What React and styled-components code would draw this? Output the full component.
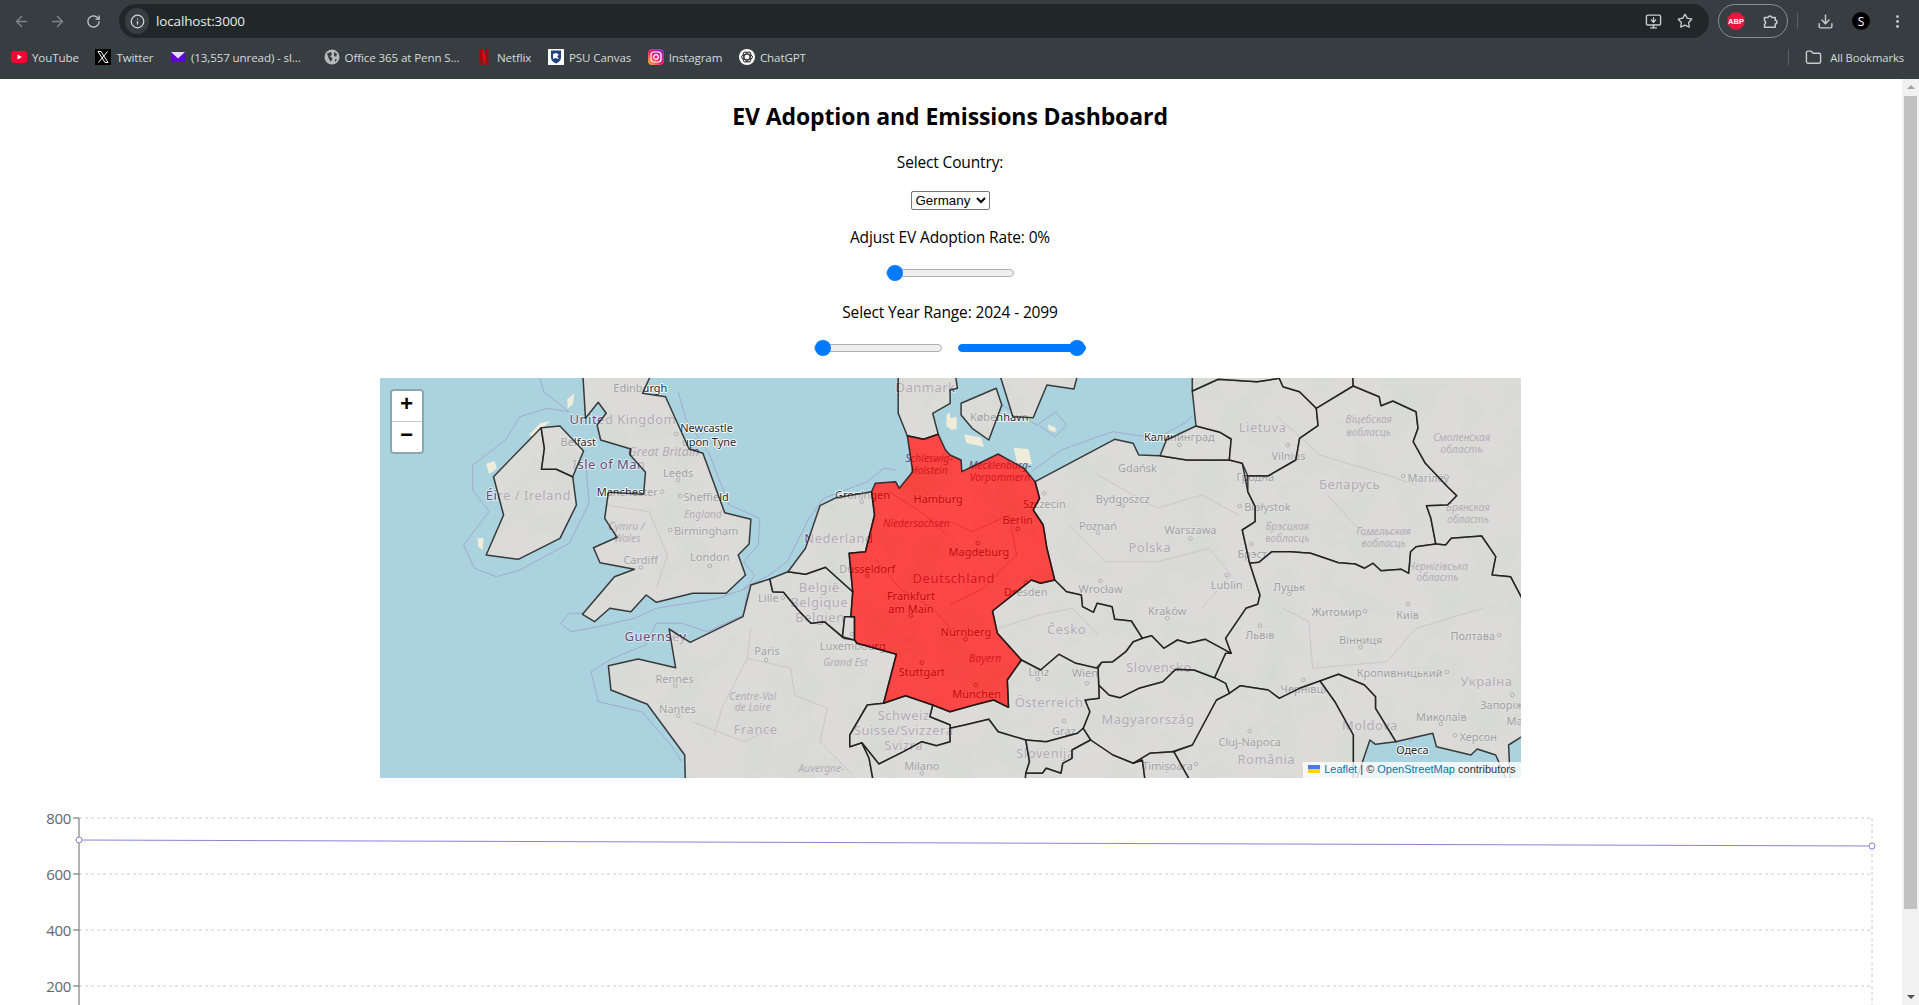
import React from 'react';
import styled, { createGlobalStyle } from 'styled-components';
import {
  ArrowLeft, ArrowRight, RotateCw, Info, MonitorDown, Star, Download, MoreVertical, Folder,
} from 'lucide-react';

const GlobalStyle = createGlobalStyle`
  html, body { margin: 0; padding: 0; height: 100%; overflow: hidden; background: #fff; }
`;

const Window = styled.div`
  display: flex;
  flex-direction: column;
  height: 1005px;
  overflow: hidden;
  font-family: "Open Sans", "Liberation Sans", sans-serif;
`;

/* browser chrome */
const Toolbar = styled.div`
  display: flex;
  align-items: center;
  height: 42px;
  padding: 0 4px 0 3px;
  box-sizing: border-box;
  background: #363e41;
`;
const NavButton = styled.div`
  flex: none;
  display: flex;
  align-items: center;
  justify-content: center;
  width: 36px;
  height: 34px;
  color: ${(p) => (p.$dim ? '#7d8588' : '#c8cccd')};
`;
const AddressBar = styled.div`
  flex: 1;
  display: flex;
  align-items: center;
  height: 34px;
  margin: 0 9px 0 8px;
  padding: 0 8px 0 6px;
  border-radius: 17px;
  background: #1f2729;
`;
const InfoBubble = styled.div`
  display: flex;
  align-items: center;
  justify-content: center;
  width: 24px;
  height: 26px;
  border-radius: 13px;
  background: #363e41;
  color: #d5d8d9;
`;
const Url = styled.span`
  flex: 1;
  margin-left: 7px;
  font-size: 13.5px;
  letter-spacing: -0.15px;
  color: #e8eaed;
`;
const BarIcon = styled.div`
  display: flex;
  width: 32px;
  justify-content: center;
  color: #c8cccd;
`;
const ExtensionPill = styled.div`
  flex: none;
  display: flex;
  align-items: center;
  justify-content: space-between;
  width: 70px;
  height: 34px;
  padding: 0 8px;
  box-sizing: border-box;
  border: 1px solid #899092;
  border-radius: 17px;
  color: #c8cccd;
`;
const Divider = styled.div`
  flex: none;
  width: 1px;
  height: ${(p) => p.$h}px;
  margin: ${(p) => p.$m};
  background: #596164;
`;
const Avatar = styled.div`
  flex: none;
  display: flex;
  align-items: center;
  justify-content: center;
  width: 18px;
  height: 18px;
  border-radius: 50%;
  background: #000;
  color: #fff;
  font-size: 12px;
`;
const BookmarkBar = styled.div`
  display: flex;
  align-items: center;
  height: 37px;
  padding: 0 0 7px 3px;
  box-sizing: border-box;
  background: #363e41;
`;
const Bookmark = styled.div`
  flex: none;
  display: flex;
  align-items: center;
  gap: 5px;
  padding: 0 ${(p) => (p.$wide ? 15 : 8.6)}px 0 8px;
  font-size: 11.6px;
  letter-spacing: -0.12px;
  color: #d6dadb;
`;
const Favicon = styled.svg`
  flex: none;
  display: block;
  width: 16px;
  height: 16px;
`;
const BookmarkRight = styled.div`
  margin-left: auto;
  display: flex;
  align-items: center;
  gap: 8px;
  padding-right: 15px;
  font-size: 11.3px;
  letter-spacing: -0.12px;
  color: #d6dadb;
`;

const Viewport = styled.div`
  flex: 1;
  display: flex;
  min-height: 0;
`;
const Page = styled.main`
  flex: 1;
  min-width: 0;
  display: flex;
  flex-direction: column;
  align-items: center;
  padding-right: 2px;
  overflow: hidden;
  color: #000;
`;

/* fake page scrollbar */
const ScrollTrack = styled.div`
  flex: none;
  display: flex;
  flex-direction: column;
  align-items: center;
  width: 17px;
  background: #f1f1f1;
`;
const ScrollArrow = styled.div`
  flex: none;
  width: 0;
  height: 0;
  margin: 6px 0;
  border-left: 4px solid transparent;
  border-right: 4px solid transparent;
  ${(p) => (p.$up ? 'border-bottom: 4px solid #a3a3a3;' : 'border-top: 4px solid #505050;')}
`;
const ScrollThumb = styled.div`
  flex: none;
  width: 13px;
  height: 813px;
  margin-top: 1px;
  background: #c1c1c1;
`;
const ScrollSpacer = styled.div`
  flex: 1;
`;

/* dashboard */
const Title = styled.h1`
  margin: 21px 0 0;
  font-size: 23px;
  line-height: 33px;
  font-weight: 700;
  letter-spacing: -0.1px;
`;
const FieldLabel = styled.div`
  margin-top: ${(p) => p.$top}px;
  font-size: 15.5px;
  line-height: 22px;
  letter-spacing: -0.15px;
`;
const CountrySelect = styled.select`
  display: block;
  width: 79px;
  height: 19px;
  margin-top: 18px;
  padding: 0;
  font-family: "Liberation Sans", Arial, sans-serif;
  font-size: 13.33px;
  color: #000;
  background: #fff;
  border: 1px solid #767676;
  border-radius: 2px;
`;
const Range = styled.input`
  display: block;
  appearance: none;
  -webkit-appearance: none;
  flex: none;
  width: 128px;
  height: 8px;
  margin: 0;
  padding: 0;
  box-sizing: border-box;
  border-radius: 5px;
  border: 1px solid ${(p) => (p.$filled ? '#007bff' : '#b0b0b0')};
  background: ${(p) => (p.$filled ? '#007bff' : '#eee')};

  &::-webkit-slider-thumb {
    -webkit-appearance: none;
    width: 16px;
    height: 16px;
    border-radius: 50%;
    background: #007bff;
    border: none;
  }
`;
const SingleRange = styled.div`
  margin-top: 21px;
  display: flex;
`;
const RangePair = styled.div`
  margin-top: 21px;
  display: flex;
  gap: 16px;
`;

/* map */
const MapFrame = styled.div`
  position: relative;
  flex: none;
  width: 1141px;
  height: 400px;
  margin-top: 26px;
  overflow: hidden;
  background: #aad3df;
`;
const MapCanvas = styled.svg`
  display: block;
  width: 1141px;
  height: 400px;
`;
const MapLabel = styled.text`
  font-family: "Noto Sans", "Open Sans", sans-serif;
  text-anchor: middle;
  dominant-baseline: central;
  paint-order: stroke;
  stroke-linejoin: round;
  ${(p) => p.$kind === 'city' && 'font-size: 11px; fill: #2a2a2a; stroke: rgba(255,255,255,.85); stroke-width: 2px;'}
  ${(p) => p.$kind === 'country' && 'font-size: 13px; letter-spacing: .5px; fill: #6d4a78; stroke: rgba(255,255,255,.55); stroke-width: 2px;'}
  ${(p) => p.$kind === 'region' && 'font-size: 10.3px; font-style: italic; fill: #6d4a78;'}
  ${(p) => p.$kind === 'bigregion' && 'font-size: 12.5px; font-style: italic; fill: #6d4a78;'}
`;
const ZoomControl = styled.div`
  position: absolute;
  top: 11px;
  left: 10px;
  width: 30px;
  border: 2px solid rgba(0, 0, 0, 0.2);
  border-radius: 4px;
  background-clip: padding-box;
`;
const ZoomButton = styled.div`
  display: block;
  height: 30px;
  text-align: center;
  background: #fff;
  color: #000;
  font: bold 22px/30px "Liberation Mono", monospace;
  ${(p) => (p.$first
    ? 'border-bottom: 1px solid #ccc; border-radius: 2px 2px 0 0;'
    : 'border-radius: 0 0 2px 2px;')}
`;
const Attribution = styled.div`
  position: absolute;
  right: 0;
  bottom: 0;
  display: flex;
  align-items: center;
  height: 16px;
  padding: 0 5px 2px;
  box-sizing: border-box;
  background: rgba(255, 255, 255, 0.8);
  font-family: "Liberation Sans", Arial, sans-serif;
  font-size: 11px;
  color: #333;
  white-space: pre;
`;
const AttributionLink = styled.a`
  color: #0078a8;
`;
const Flag = styled.svg`
  width: 12px;
  height: 8px;
  margin-right: 4px;
`;

/* chart */
const ChartBox = styled.div`
  flex: none;
  width: 100%;
  margin-top: 20px;
`;
const ChartSvg = styled.svg`
  display: block;
`;
const Tick = styled.text`
  font-family: "Open Sans", sans-serif;
  font-size: 15px;
  letter-spacing: -0.3px;
  fill: #666;
  text-anchor: end;
  dominant-baseline: central;
`;

// the screenshot crops were read in two frames, these turn them into map pixels
const pairs = (s) => s.trim().split(/\s+/).map((p) => p.split(',').map(Number));
const W = (s) => pairs(s).map(([x, y]) => [x / 2.75, y / 3 - 3]);
const E = (s) => pairs(s).map(([x, y]) => [570 + x / 2.703, y / 3 - 3]);
const toPoints = (pts) => pts.map(([x, y]) => `${x.toFixed(1)},${y.toFixed(1)}`).join(' ');

const countries = [
  W('443,158 452,220 444,283 485,283 530,305 540,390 495,490 380,553 292,540 340,420 312,305'),
  W('443,158 495,153 560,228 530,305 485,283 444,283 452,220'),
  W('558,0 565,130 600,82 622,115 597,150 607,195 690,222 688,240 730,292 725,358 628,352 618,430 652,487 587,518 605,563 700,583 645,605 557,718 590,740 632,700 690,710 732,660 760,682 860,655 952,655 1005,600 985,540 1015,507 1020,433 948,413 888,235 850,222 785,65 722,55 745,0'),
  W('840,1240 838,1140 735,988 635,945 628,872 710,852 813,878 795,762 853,802 998,725 1020,630 1072,612 1080,650 1110,652 1150,705 1185,745 1222,740 1275,790 1305,795 1312,805 1420,838 1385,985 1340,990 1292,1080 1292,1115 1325,1103 1345,1150 1360,1240'),
  W('1072,612 1122,590 1170,598 1225,577 1300,650 1295,725 1278,725 1272,785 1222,740 1185,745 1150,705 1110,652 1080,650'),
  W('1278,725 1305,725 1305,795 1272,785'),
  W('1122,590 1170,520 1210,392 1255,368 1352,350 1360,420 1335,530 1290,535 1300,650 1225,577 1170,598'),
  [...W('1425,0 1425,115 1450,182 1495,193 1535,178 1520,115 1568,85'), ...E('0,45 20,40 15,0')],
  E('30,85 125,40 140,90 105,195 60,160 30,120'),
  E('135,0 170,125 225,128 262,30 335,42 345,0'),
  E('230,320 445,193 495,205 510,240 568,242 640,255 755,255 790,265 805,350 825,395 825,440 790,465 810,565 838,660 832,688 800,700 745,790 760,835 690,793 645,805 615,795 578,820 545,782 520,790 490,738 445,733 438,695 398,685 388,712 358,695 355,660 315,650 283,615 262,520 252,450 225,405 242,370'),
  E('568,242 585,195 665,153 730,172 760,192 755,255 640,255'),
  E('655,48 725,13 830,20 890,10 900,35 945,50 990,100 995,152 945,190 935,255 860,303 805,303 790,265 755,255 760,192 730,172 665,153'),
  E('655,-10 655,48 725,13 830,20 890,10 900,35 945,50 990,100 1090,33 1088,-10'),
  E('990,100 1090,33 1160,65 1165,92 1197,78 1260,110 1265,160 1252,200 1285,265 1345,335 1370,362 1345,390 1288,392 1300,430 1313,507 1260,515 1245,530 1240,595 1220,583 1165,587 1143,565 1120,580 1095,567 1050,563 975,535 920,530 870,530 835,562 810,565 790,465 825,440 825,395 805,350 805,303 860,303 935,255 945,190 995,152'),
  E('1088,-10 1090,33 1160,65 1165,92 1197,78 1260,110 1265,160 1252,200 1285,265 1345,335 1370,362 1345,390 1288,392 1300,430 1313,507 1340,510 1355,490 1437,483 1475,545 1465,600 1515,605 1560,700 1560,-10'),
  E('810,565 835,562 870,530 920,530 975,535 1050,563 1095,567 1120,580 1143,565 1165,587 1220,583 1240,595 1245,530 1260,515 1313,507 1340,510 1355,490 1437,483 1475,545 1465,600 1515,605 1560,700 1560,1075 1510,1110 1515,1240 1475,1140 1425,1122 1408,1140 1315,1115 1305,1075 1245,1090 1205,1100 1150,1000 1150,965 1120,930 1050,898 1000,918 945,940 890,970 860,945 785,932 755,955 745,925 715,908 745,835 760,835 745,790 800,700 832,688 838,660'),
  E('1000,918 1050,898 1120,930 1150,965 1150,1000 1205,1100 1150,1108 1135,1095 1115,1160 1090,1240 1090,1080 1040,980'),
  E('755,955 785,932 860,945 890,970 945,940 1000,918 1040,980 1090,1080 1090,1240 660,1240 605,1130 655,1110 720,975'),
  E('402,930 430,960 460,968 510,940 575,920 610,883 660,885 715,908 745,925 755,955 720,975 655,1110 600,1130 540,1135 495,1165 440,1140 380,1095 360,1060 378,1010 365,975 403,970'),
  E('400,880 410,862 440,860 475,830 495,800 520,790 545,782 578,820 615,795 645,805 690,793 760,835 745,835 715,908 660,885 610,883 575,920 510,940 460,968 430,960 402,930'),
  E('115,708 220,615 245,625 283,615 315,650 355,660 358,695 388,712 398,685 438,695 445,733 490,738 520,790 495,800 475,830 440,860 410,862 395,880 340,865 295,838 245,885 193,855 128,775'),
  [...E('193,855 245,885 295,838 340,865 400,880 402,930 403,970 365,975 378,1010 360,1060 345,1075 260,1100 205,1095 130,1070 105,1033 40,1050 0,1060'), ...W('1568,1050 1512,1025 1520,990'), ...E('0,1010 65,990 118,975 158,997 155,915')],
  [...W('1340,990 1385,985 1445,962 1520,990 1512,1025 1568,1050'), ...E('0,1060'), ...W('1568,1100 1530,1112 1490,1100 1440,1130 1372,1167 1325,1103 1292,1115 1292,1080')],
  [...W('1325,1103 1372,1167 1440,1130 1490,1100 1530,1112 1568,1100'), ...E('0,1060 40,1050 105,1033 130,1070 205,1095 215,1160 205,1195 205,1240'), ...W('1360,1240 1345,1150')],
  E('205,1095 260,1100 345,1075 360,1060 380,1095 330,1125 330,1150 305,1165 300,1195 260,1180 250,1195 205,1195 215,1160'),
  E('205,1195 250,1195 260,1180 300,1195 305,1165 330,1150 330,1125 380,1095 440,1140 495,1165 520,1155 530,1240 200,1240'),
  E('495,1165 540,1135 605,1130 660,1240 530,1240 520,1155'),
];

const germany = [
  ...W('1450,182 1495,193 1535,178 1555,225'),
  ...E('0,240 30,255 32,290 130,237 200,280 230,320 242,370 225,405 252,450 262,520 283,615 245,625 220,615 115,708 128,775 193,855 155,915 158,997 118,975 65,990 0,1010'),
  ...W('1520,990 1445,962 1385,985 1420,838 1312,805 1305,795 1305,725 1295,725 1300,650 1290,535 1335,530 1360,420 1352,350 1362,325 1418,320 1428,340 1465,290'),
];

// bits of coast that stick out past the simplified borders
const coast = [
  W('292,266 315,258 322,280 300,298'),
  W('268,490 285,490 282,525 270,515'),
  W('515,72 535,55 530,88 516,102'),
  W('410,180 440,145 470,138 445,160 420,185'),
  W('950,415 1015,432 1015,442 960,428'),
  W('1558,120 1568,112 1568,160 1558,155'),
  E('0,130 18,125 18,162 0,165'),
  E('38,178 85,188 92,216 44,204'),
  E('172,218 212,222 222,268 182,268'),
  E('265,148 288,160 284,172 267,165'),
];

const maritime = [
  W('440,10 450,50 520,110'),
  W('520,110 460,100 385,125 345,195 255,270 255,345 300,410 230,510 260,580 320,605 385,585 520,505 575,385 565,250'),
  W('820,50 840,130 905,235 960,390 1045,430 1040,510 1000,560 1030,600 1010,640 930,670 760,700 700,730 600,755 525,770 497,745 520,715 560,715'),
  W('1000,640 1070,600 1120,560 1180,430 1220,370 1340,320 1385,280 1420,285'),
  W('900,770 1000,720 1010,650'),
  W('900,770 830,745 760,745 730,810 640,850 580,890 600,980 720,1010 800,1110 830,1160'),
  E('140,90 235,150 285,110 315,150 285,185 240,150'),
  E('220,290 300,225 440,170 560,190 640,140 655,120'),
  E('1240,1100 1300,1060 1420,1120 1510,1100'),
];

const regional = [
  W('1010,850 1130,880 1140,960 1230,1000 1210,1100 1300,1200'),
  W('860,1040 1000,1100 1080,1060'),
  W('1020,760 1010,850 940,1000 920,1080'),
  W('620,390 740,410 790,540 760,640'),
  W('1360,550 1430,640 1520,700 1568,760'),
  W('1400,350 1500,420 1560,480'),
  E('320,450 420,560 560,560 700,520 760,600 680,700'),
  E('400,300 560,400 680,360 780,420'),
  E('900,700 970,740 980,880 1180,860 1260,760 1440,700'),
  E('880,120 1000,240 1180,300 1260,330'),
  E('1020,360 1120,480 1240,470'),
  E('130,760 240,720 330,700 400,780'),
  E('0,440 60,470 160,420 180,540 90,640 0,690'),
];

const westLabels = [
  ['Edinburgh', 716, 37, 'city'], ['United Kingdom', 668, 132, 'country'], ['Belfast', 545, 198, 'city'],
  ['Newcastle', 898, 157, 'city'], ['upon Tyne', 905, 198, 'city'], ['Great Britain', 780, 230, 'bigregion'],
  ['Isle of Man', 630, 268, 'country'], ['Leeds', 820, 292, 'city'], ['Éire / Ireland', 408, 360, 'country'],
  ['Manchester', 680, 350, 'city'], ['Sheffield', 897, 364, 'city'], ['England', 888, 418, 'region'],
  ['Birmingham', 897, 466, 'city'], ['Cymru /', 678, 452, 'region'], ['Wales', 680, 488, 'region'],
  ['Cardiff', 717, 552, 'city'], ['London', 907, 544, 'city'], ['Groningen', 1327, 358, 'city'],
  ['Nederland', 1262, 490, 'country'], ['Düsseldorf', 1340, 580, 'city'], ['België', 1208, 636, 'country'],
  ['Belgique', 1208, 682, 'country'], ['Belgien', 1210, 726, 'country'], ['Lille', 1068, 668, 'city'],
  ['Frankfurt', 1460, 660, 'city'], ['am Main', 1460, 700, 'city'], ['Luxembourg', 1300, 810, 'city'],
  ['Paris', 1064, 826, 'city'], ['Grand Est', 1280, 862, 'region'], ['Stuttgart', 1490, 890, 'city'],
  ['Rennes', 810, 910, 'city'], ['Nantes', 818, 1000, 'city'], ['Guernsey', 758, 782, 'country'],
  ['Centre-Val', 1025, 962, 'region'], ['de Loire', 1025, 997, 'region'], ['France', 1033, 1063, 'country'],
  ['Auvergne-', 1214, 1180, 'region'], ['Schweiz', 1440, 1020, 'country'], ['Suisse/Svizzera', 1440, 1065, 'country'],
  ['Svizra', 1440, 1110, 'country'], ['Milano', 1490, 1172, 'city'], ['Danmark', 1500, 36, 'country'],
  ['Schleswig-', 1510, 248, 'region'], ['Holstein', 1510, 285, 'region'], ['Hamburg', 1535, 370, 'city'],
  ['Niedersachsen', 1475, 443, 'region'],
];

const eastLabels = [
  ['Deutschland', 10, 610, 'country'], ['Nürnberg', 43, 770, 'city'],
  ['København', 133, 123, 'city'], ['Mecklenburg-', 135, 270, 'region'], ['Vorpommern', 135, 305, 'region'],
  ['Szczecin', 255, 385, 'city'], ['Berlin', 183, 432, 'city'], ['Magdeburg', 78, 530, 'city'],
  ['Dresden', 205, 650, 'city'], ['Bayern', 95, 848, 'region'], ['München', 72, 955, 'city'],
  ['Gdańsk', 507, 277, 'city'], ['Bydgoszcz', 467, 370, 'city'], ['Poznań', 400, 450, 'city'],
  ['Warszawa', 650, 463, 'city'], ['Polska', 540, 517, 'country'], ['Wrocław', 407, 640, 'city'],
  ['Lublin', 748, 628, 'city'], ['Kraków', 587, 706, 'city'], ['Česko', 315, 762, 'country'],
  ['Slovensko', 565, 877, 'country'], ['Linz', 240, 888, 'city'], ['Wien', 365, 892, 'city'],
  ['Österreich', 268, 980, 'country'], ['Magyarország', 535, 1032, 'country'], ['Graz', 308, 1065, 'city'],
  ['Slovenija', 258, 1135, 'country'], ['Cluj-Napoca', 810, 1100, 'city'], ['România', 855, 1152, 'country'],
  ['Timișoara', 588, 1170, 'city'], ['Чернівці', 955, 940, 'city'], ['Lietuva', 845, 155, 'country'],
  ['Vilnius', 915, 240, 'city'], ['Калининград', 620, 185, 'city'], ['Гродна', 825, 305, 'city'],
  ['Białystok', 858, 393, 'city'], ['Брэст', 817, 535, 'city'], ['Беларусь', 1080, 327, 'country'],
  ['Магілёў', 1293, 307, 'city'], ['Віцебская', 1132, 133, 'region'], ['вобласць', 1132, 170, 'region'],
  ['Смоленская', 1383, 187, 'region'], ['область', 1383, 222, 'region'], ['Брянская', 1400, 397, 'region'],
  ['область', 1400, 432, 'region'], ['Брэсцкая', 912, 452, 'region'], ['вобласць', 912, 488, 'region'],
  ['Гомельская', 1172, 467, 'region'], ['вобласць', 1172, 503, 'region'], ['Чернігівська', 1320, 572, 'region'],
  ['область', 1318, 607, 'region'], ['Луцьк', 917, 633, 'city'], ['Житомир', 1045, 710, 'city'],
  ['Київ', 1237, 717, 'city'], ['Львів', 838, 778, 'city'], ['Вінниця', 1110, 793, 'city'],
  ['Полтава', 1413, 780, 'city'], ['Кропивницький', 1215, 893, 'city'], ['Україна', 1450, 917, 'country'],
  ['Запоріж', 1492, 987, 'city'], ['Миколаїв', 1328, 1025, 'city'], ['Херсон', 1428, 1083, 'city'],
  ['Одеса', 1250, 1123, 'city'], ['Moldova', 1135, 1050, 'country'], ['Ма', 1526, 1037, 'city'],
];

const westDots = [[820, 315], [776, 350], [826, 363], [798, 465], [717, 577], [907, 573], [1108, 668], [1062, 855], [812, 933], [820, 1022], [1340, 603], [1460, 722], [1490, 863], [1490, 1195], [1325, 380], [1298, 777], [815, 177]];
const eastDots = [[183, 462], [75, 505], [255, 355], [467, 392], [400, 473], [650, 491], [407, 618], [748, 600], [587, 730], [370, 925], [238, 912], [308, 1038], [810, 1068], [665, 1167], [955, 915], [913, 210], [620, 210], [783, 393], [815, 507], [1225, 303], [917, 657], [1122, 708], [1238, 687], [838, 752], [1110, 816], [1485, 780], [1343, 891], [1520, 960], [1327, 1047], [1365, 1081], [42, 792], [70, 930], [205, 623]];

const YouTubeIcon = () => (
  <Favicon viewBox="0 0 16 16">
    <rect x="0" y="2" width="16" height="12" rx="3" fill="#ff0033" />
    <path d="M6.5 5.5 11 8l-4.500 2.500z" fill="#fff" />
  </Favicon>
);
const XIcon = () => (
  <Favicon viewBox="0 0 16 16">
    <rect width="16" height="16" fill="#000" />
    <path d="M3 2.500h3l7 11h-3zM12.500 2.500 3.500 13.500" fill="none" stroke="#fff" strokeWidth="1" />
  </Favicon>
);
const YahooIcon = () => (
  <Favicon viewBox="0 0 16 16">
    <rect x="1" y="3" width="14" height="10" fill="#6001d2" />
    <path d="M1 3h14L8 9.500z" fill="#e8dcfa" />
  </Favicon>
);
const GlobeIcon = () => (
  <Favicon viewBox="0 0 16 16">
    <circle cx="8" cy="8" r="7.500" fill="#b6babb" />
    <path d="M3 4.500 7 3l1 2.500-2 2 2.500 1.500-1.500 4-2-3zM10 3l3 2-1 3-2-1.500zM11 10l2 .500-2 2.500z" fill="#363e41" />
  </Favicon>
);
const NetflixIcon = () => (
  <Favicon viewBox="0 0 16 16">
    <path d="M3.500 0H7l5.500 16H9z" fill="#e50914" />
    <path d="M3.500 0H6.500V15.500L3.500 16zM9.500 0h3v16l-3-.500z" fill="#a50710" />
  </Favicon>
);
const CanvasIcon = () => (
  <Favicon viewBox="0 0 16 16">
    <rect width="16" height="16" fill="#fff" />
    <path d="M3 1.500h10v7c0 3-2.500 5-5 6-2.500-1-5-3-5-6z" fill="#1e407c" />
    <path d="M5 5c2-1.500 5-1 6 1l-2 1 2 3-4-1-2 1z" fill="#fff" />
  </Favicon>
);
const InstagramIcon = () => (
  <Favicon viewBox="0 0 16 16">
    <defs>
      <linearGradient id="ig" x1="0" y1="1" x2="1" y2="0">
        <stop offset="0" stopColor="#fdc12e" />
        <stop offset=".45" stopColor="#f0246e" />
        <stop offset="1" stopColor="#7a30d6" />
      </linearGradient>
    </defs>
    <rect width="16" height="16" rx="4" fill="url(#ig)" />
    <rect x="3" y="3" width="10" height="10" rx="3" fill="none" stroke="#fff" strokeWidth="1.200" />
    <circle cx="8" cy="8" r="2.300" fill="none" stroke="#fff" strokeWidth="1.200" />
  </Favicon>
);
const ChatGptIcon = () => (
  <Favicon viewBox="0 0 16 16">
    <circle cx="8" cy="8" r="8" fill="#fff" />
    <g fill="none" stroke="#333" strokeWidth="1">
      <ellipse cx="8" cy="8" rx="5.500" ry="2.800" />
      <ellipse cx="8" cy="8" rx="5.500" ry="2.800" transform="rotate(60 8 8)" />
      <ellipse cx="8" cy="8" rx="5.500" ry="2.800" transform="rotate(120 8 8)" />
    </g>
  </Favicon>
);
const AbpIcon = () => (
  <svg width="18" height="18" viewBox="0 0 18 18">
    <path d="M5.500 .5h7l5 5v7l-5 5h-7l-5-5v-7z" fill="#e8173f" />
    <text x="9" y="11.800" textAnchor="middle" fontFamily="Liberation Sans" fontWeight="700" fontSize="7.500" fill="#fff">ABP</text>
  </svg>
);
const PuzzleIcon = () => (
  <svg width="17" height="17" viewBox="0 0 17 17" fill="none" stroke="currentColor" strokeWidth="1.500" strokeLinejoin="round">
    <path d="M2.500 4.500H6a2 2 0 0 1 3.800 0h3.400v2.800a1.800 1.800 0 0 1 0 3.600v3.300H2.500v-3a1.900 1.900 0 0 0 0-3.500z" />
  </svg>
);

const bookmarks = [
  { icon: YouTubeIcon, label: 'YouTube' },
  { icon: XIcon, label: 'Twitter' },
  { icon: YahooIcon, label: '(13,557 unread) - sl...', wide: true },
  { icon: GlobeIcon, label: 'Office 365 at Penn S...' },
  { icon: NetflixIcon, label: 'Netflix' },
  { icon: CanvasIcon, label: 'PSU Canvas' },
  { icon: InstagramIcon, label: 'Instagram' },
  { icon: ChatGptIcon, label: 'ChatGPT' },
];

const BrowserChrome = () => (
  <>
    <Toolbar>
      <NavButton $dim><ArrowLeft size={17} /></NavButton>
      <NavButton $dim><ArrowRight size={17} /></NavButton>
      <NavButton><RotateCw size={15} /></NavButton>
      <AddressBar>
        <InfoBubble><Info size={15} /></InfoBubble>
        <Url>localhost:3000</Url>
        <BarIcon><MonitorDown size={17} /></BarIcon>
        <BarIcon><Star size={16} /></BarIcon>
      </AddressBar>
      <ExtensionPill>
        <AbpIcon />
        <PuzzleIcon />
      </ExtensionPill>
      <Divider $h={16} $m="0 9px" />
      <NavButton><Download size={17} /></NavButton>
      <NavButton><Avatar>S</Avatar></NavButton>
      <NavButton><MoreVertical size={17} /></NavButton>
    </Toolbar>
    <BookmarkBar>
      {bookmarks.map(({ icon: Icon, label, wide }) => (
        <Bookmark key={label} $wide={wide}>
          <Icon />
          {label}
        </Bookmark>
      ))}
      <BookmarkRight>
        <Divider $h={16} $m="0 8px 0 0" />
        <Folder size={17} color="#c8cccd" />
        All Bookmarks
      </BookmarkRight>
    </BookmarkBar>
  </>
);

const EuropeMap = () => (
  <MapFrame>
    <MapCanvas viewBox="0 0 1141 400">
      <defs>
        <filter id="mottle" x="0" y="0" width="100%" height="100%">
          <feTurbulence type="fractalNoise" baseFrequency=".025" numOctaves="3" seed="4" />
          <feColorMatrix values="0 0 0 0 .72  0 0 0 0 .8  0 0 0 0 .62  0 0 0 1.800 -.65" />
          <feComposite in2="SourceAlpha" operator="in" result="noise" />
          <feMerge>
            <feMergeNode in="SourceGraphic" />
            <feMergeNode in="noise" />
          </feMerge>
        </filter>
      </defs>
      <rect width="1141" height="400" fill="#aad3df" />
      <g fill="none" stroke="#a6a9cb" strokeWidth="1">
        {maritime.map((pts, i) => <polyline key={i} points={toPoints(pts)} />)}
      </g>
      <g fill="#f2efe9" filter="url(#mottle)">
        {countries.map((pts, i) => <polygon key={i} points={toPoints(pts)} />)}
        <polygon points={toPoints(germany)} />
      </g>
      <g fill="#efecd9">
        {coast.map((pts, i) => <polygon key={i} points={toPoints(pts)} />)}
      </g>
      <g fill="none" stroke="#b3a4b5" strokeWidth="1">
        {regional.map((pts, i) => <polyline key={i} points={toPoints(pts)} />)}
      </g>
      <g>
        {westLabels.map(([t, x, y, kind]) => {
          const [[px, py]] = W(`${x},${y}`);
          return <MapLabel key={`w${t}${x}`} x={px} y={py} $kind={kind}>{t}</MapLabel>;
        })}
        {eastLabels.map(([t, x, y, kind]) => {
          const [[px, py]] = E(`${x},${y}`);
          return <MapLabel key={`e${t}${x}`} x={px} y={py} $kind={kind}>{t}</MapLabel>;
        })}
      </g>
      <g fill="#fff" stroke="#555" strokeWidth="1">
        {[...westDots.map(([x, y]) => W(`${x},${y}`)[0]), ...eastDots.map(([x, y]) => E(`${x},${y}`)[0])].map(([x, y], i) => (
          <circle key={i} cx={x} cy={y} r="1.800" />
        ))}
      </g>
      <g fill="lightgray" fillOpacity=".7" stroke="#111" strokeOpacity=".8" strokeWidth="1.500" strokeLinejoin="round">
        {countries.map((pts, i) => <polygon key={i} points={toPoints(pts)} />)}
      </g>
      <polygon points={toPoints(germany)} fill="#ff0000" fillOpacity=".7" stroke="#111" strokeOpacity=".8" strokeWidth="1.500" strokeLinejoin="round" />
    </MapCanvas>
    <ZoomControl>
      <ZoomButton $first>+</ZoomButton>
      <ZoomButton>−</ZoomButton>
    </ZoomControl>
    <Attribution>
      <Flag viewBox="0 0 12 8">
        <rect width="12" height="4" fill="#4c7be1" />
        <rect y="4" width="12" height="4" fill="#ffd500" />
      </Flag>
      <AttributionLink>Leaflet</AttributionLink>
      {' | © '}
      <AttributionLink>OpenStreetMap</AttributionLink>
      {' contributors'}
    </Attribution>
  </MapFrame>
);

const ticks = [800, 600, 400, 200];
const tickY = (v) => 20 + (800 - v) * 0.28;

const EmissionsChart = () => (
  <ChartBox>
    <ChartSvg width="1902" height="300">
      <g stroke="#ccc" strokeDasharray="3 3" fill="none">
        {ticks.map((v) => <line key={v} x1="79" x2="1872" y1={tickY(v)} y2={tickY(v)} />)}
        <line x1="1872" x2="1872" y1="20" y2="300" />
      </g>
      <line x1="79" x2="79" y1="20" y2="300" stroke="#666" />
      {ticks.map((v) => (
        <g key={v}>
          <line x1="73" x2="79" y1={tickY(v)} y2={tickY(v)} stroke="#666" />
          <Tick x="71" y={tickY(v)}>{v}</Tick>
        </g>
      ))}
      <line x1="79" y1="42" x2="1872" y2="48" stroke="#8884d8" />
      <circle cx="79" cy="42" r="3" fill="#fff" stroke="#8884d8" />
      <circle cx="1872" cy="48" r="3" fill="#fff" stroke="#8884d8" />
    </ChartSvg>
  </ChartBox>
);

export default function App() {
  return (
    <Window>
      <GlobalStyle />
      <BrowserChrome />
      <Viewport>
        <Page>
          <Title>EV Adoption and Emissions Dashboard</Title>
          <FieldLabel $top={18}>Select Country:</FieldLabel>
          <CountrySelect defaultValue="Germany">
            <option>Germany</option>
          </CountrySelect>
          <FieldLabel $top={16}>Adjust EV Adoption Rate: 0%</FieldLabel>
          <SingleRange>
            <Range type="range" min="0" max="100" defaultValue="0" />
          </SingleRange>
          <FieldLabel $top={24}>Select Year Range: 2024 - 2099</FieldLabel>
          <RangePair>
            <Range type="range" min="2024" max="2099" defaultValue="2024" />
            <Range type="range" min="2024" max="2099" defaultValue="2099" $filled />
          </RangePair>
          <EuropeMap />
          <EmissionsChart />
        </Page>
        <ScrollTrack>
          <ScrollArrow $up />
          <ScrollThumb />
          <ScrollSpacer />
          <ScrollArrow />
        </ScrollTrack>
      </Viewport>
    </Window>
  );
}
